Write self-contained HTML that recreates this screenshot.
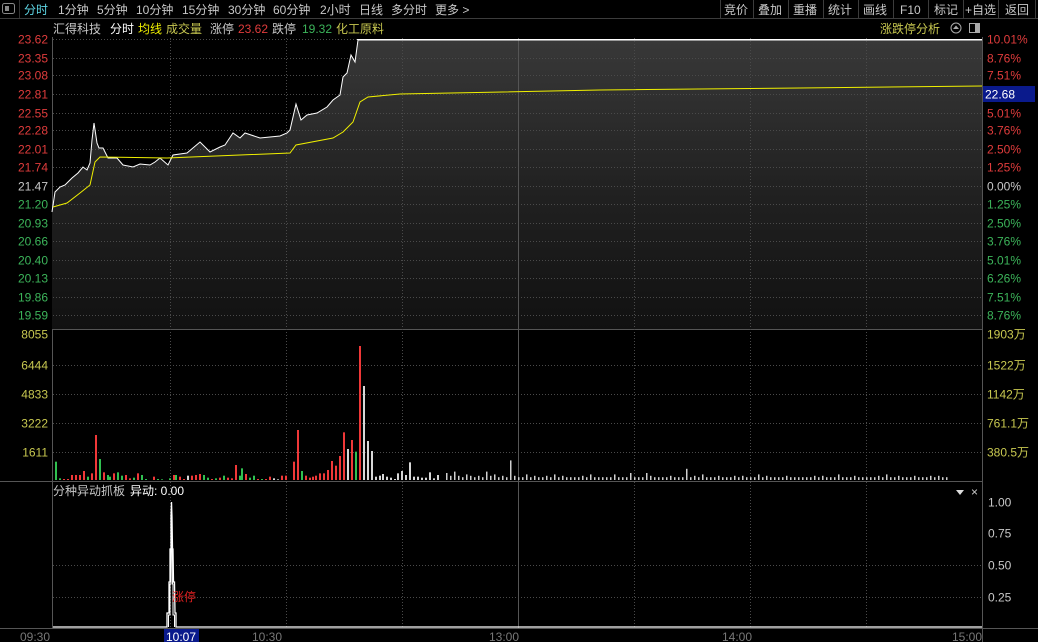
<!DOCTYPE html>
<html><head><meta charset="utf-8"><style>
html,body{margin:0;padding:0;background:#000;width:1038px;height:642px;overflow:hidden}
svg{display:block}
text{font-family:"Liberation Sans","Noto Sans CJK SC",sans-serif;font-size:12px}
</style></head><body>
<svg id="s" width="1038" height="642" xmlns="http://www.w3.org/2000/svg">
<defs>
<linearGradient id="g" x1="0" y1="0" x2="0" y2="1">
<stop offset="0" stop-color="#383838"/><stop offset="0.5" stop-color="#222"/><stop offset="1" stop-color="#111"/>
</linearGradient>
</defs>
<rect width="1038" height="642" fill="#000"/>
<line x1="0" y1="18.5" x2="1038" y2="18.5" stroke="#3c3c3c"/>
<rect x="2.5" y="3.5" width="12" height="10" rx="2" fill="none" stroke="#888"/>
<rect x="5" y="6" width="4" height="5" fill="#888"/>
<line x1="19.5" y1="0" x2="19.5" y2="18" stroke="#333"/>
<g fill="#c8c8c8">
<text x="24" y="14" fill="#5fd7e6">分时</text>
<text x="58" y="14">1分钟</text>
<text x="97" y="14">5分钟</text>
<text x="136" y="14">10分钟</text>
<text x="182" y="14">15分钟</text>
<text x="228" y="14">30分钟</text>
<text x="273" y="14">60分钟</text>
<text x="320" y="14">2小时</text>
<text x="359" y="14">日线</text>
<text x="391" y="14">多分时</text>
<text x="435" y="14">更多 &gt;</text>
<text x="724" y="14">竞价</text>
<text x="758" y="14">叠加</text>
<text x="793" y="14">重播</text>
<text x="828" y="14">统计</text>
<text x="863" y="14">画线</text>
<text x="900" y="14">F10</text>
<text x="934" y="14">标记</text>
<text x="965" y="14">+自选</text>
<text x="1005" y="14">返回</text>
</g>
<g stroke="#3c3c3c">
<line x1="720.5" y1="0" x2="720.5" y2="18"/><line x1="753.5" y1="0" x2="753.5" y2="18"/>
<line x1="788.5" y1="0" x2="788.5" y2="18"/><line x1="823.5" y1="0" x2="823.5" y2="18"/>
<line x1="858.5" y1="0" x2="858.5" y2="18"/><line x1="893.5" y1="0" x2="893.5" y2="18"/>
<line x1="928.5" y1="0" x2="928.5" y2="18"/><line x1="963.5" y1="0" x2="963.5" y2="18"/>
<line x1="998.5" y1="0" x2="998.5" y2="18"/><line x1="1035.5" y1="0" x2="1035.5" y2="18"/>
</g>
<text x="53" y="33" fill="#c8c8c8">汇得科技</text>
<text x="110" y="33" fill="#fff">分时</text>
<text x="138" y="33" fill="#f0f000">均线</text>
<text x="166" y="33" fill="#c8c850">成交量</text>
<text x="210" y="33" fill="#c8c8c8">涨停</text>
<text x="238" y="33" fill="#e03c3c">23.62</text>
<text x="272" y="33" fill="#c8c8c8">跌停</text>
<text x="302" y="33" fill="#3cb45a">19.32</text>
<text x="336" y="33" fill="#c8c850">化工原料</text>
<text x="880" y="33" fill="#c8c850">涨跌停分析</text>
<circle cx="956" cy="28" r="5" fill="none" stroke="#aaa"/><path d="M953 29 L956 25.5 L959 29 Z" fill="#aaa"/>
<rect x="969.5" y="23.5" width="10" height="9" fill="none" stroke="#aaa"/><rect x="975" y="24" width="4" height="8" fill="#aaa"/>
<g stroke="#555" fill="none">
<line x1="52.5" y1="37" x2="52.5" y2="628"/>
<line x1="982.5" y1="37" x2="982.5" y2="642"/>
<line x1="52" y1="329.5" x2="982" y2="329.5"/>
<line x1="0" y1="481.5" x2="982" y2="481.5"/>
<line x1="0" y1="628.5" x2="1038" y2="628.5"/>
</g>
<path id="fill" fill="url(#g)"/>
<g id="grid" stroke="#4a4a4a" stroke-dasharray="1,2"></g>
<polyline id="pl" fill="none" stroke="#fff" stroke-width="1"/>
<polyline id="al" fill="none" stroke="#f0f000" stroke-width="1"/>
<line x1="357" y1="39.5" x2="982" y2="39.5" stroke="#fff"/>
<g id="vol"></g>
<text x="53" y="495" fill="#c8c8c8">分种异动抓板</text>
<text x="130" y="495" fill="#fff">异动: 0.00</text>
<path d="M956 490 L964 490 L960 495 Z" fill="#ddd"/>
<text x="971" y="496" fill="#ccc" font-size="11">×</text>
<polyline fill="none" stroke="#fff" stroke-width="1.3" points="53,627 167,627 167,613 169,613 169,582 170,582 170,549 171,549 171,517 171.5,502 172,517 172.5,549 173,549 173.5,582 174.5,582 175,613 176,613 176,627 982,627"/>
<polyline fill="none" stroke="#fff" points="168.5,627 168.5,615 170,615 170,584 171,584 171,551 171.5,519 172,551 172.5,584 173,584 173,615 174.5,615 174.5,627"/>
<text x="172" y="601" fill="#e02020">涨停</text>
<g id="la" text-anchor="end"></g>
<g id="ra"></g>
<rect x="983" y="86" width="52" height="16" fill="#0a1a8c"/>
<text x="985" y="98.5" fill="#fff">22.68</text>
<g fill="#777">
<text x="20" y="641">09:30</text>
<text x="252" y="641">10:30</text>
<text x="489" y="641">13:00</text>
<text x="722" y="641">14:00</text>
<text x="952" y="641">15:00</text>
</g>
<rect x="164" y="629" width="35" height="13" fill="#0a1a8c"/>
<text x="166" y="641" fill="#fff">10:07</text>
</svg>
<script>
var NS="http://www.w3.org/2000/svg";
function el(p,t,a,tx){var e=document.createElementNS(NS,t);for(var k in a)e.setAttribute(k,a[k]);if(tx)e.textContent=tx;document.getElementById(p).appendChild(e);return e;}
var ph=[39,58,75,94,113,130,149,167,186,204,223,241,260,278,297,315];
ph.forEach(function(y){el('grid','line',{x1:53,x2:982,y1:y+.5,y2:y+.5});});
[365,394,423,452].forEach(function(y){el('grid','line',{x1:53,x2:982,y1:y+.5,y2:y+.5});});
[565,597].forEach(function(y){el('grid','line',{x1:53,x2:982,y1:y+.5,y2:y+.5});});
[170,286,402,634,750,866].forEach(function(x){el('grid','line',{x1:x+.5,x2:x+.5,y1:38,y2:628});});
var ln=el('grid','line',{x1:518.5,x2:518.5,y1:38,y2:628});ln.setAttribute('stroke-dasharray','none');ln.setAttribute('stroke','#555');
var P="52,212 55,192 60,187 65,185 72,178 78,173 83,167 87,170 90,163 92,140 94,123 97,143 99,148 103,148 108,158 117,158 123,165 133,167 140,164 150,165 155,162 160,158 168,165 173,155 187,153 200,142 210,152 220,147 225,145 233,133 240,138 245,133 260,138 270,137 280,136 287,133 290,130 296,104 301,120 307,115 317,113 327,107 333,100 340,95 343,77 347,73 351,55 355,62 358,40 982,40";
document.getElementById('pl').setAttribute('points',P);
document.getElementById('fill').setAttribute('d','M'+P.replace(/ /g,' L')+' L982,329 L52,329 Z');
document.getElementById('al').setAttribute('points',"53,207 67,203 80,193 90,185 95,162 100,157 167,158 240,155 290,153 296,145 333,138 343,132 353,122 360,102 368,97 400,94 600,90 800,88 982,86");
var pl=["23.62","23.35","23.08","22.81","22.55","22.28","22.01","21.74","21.47","21.20","20.93","20.66","20.40","20.13","19.86","19.59"];
var pr=["10.01%","8.76%","7.51%","","5.01%","3.76%","2.50%","1.25%","0.00%","1.25%","2.50%","3.76%","5.01%","6.26%","7.51%","8.76%"];
pl.forEach(function(t,i){var c=i<8?'#e03c3c':(i==8?'#c8c8c8':'#3cb45a');el('la','text',{x:48,y:ph[i]+4.5,fill:c},t);if(pr[i])el('ra','text',{x:987,y:ph[i]+4.5,fill:c},pr[i]);});
[["8055","1903万",334],["6444","1522万",365],["4833","1142万",394],["3222","761.1万",423],["1611","380.5万",452]].forEach(function(a){el('la','text',{x:48,y:a[2]+4.5,fill:'#c8c850'},a[0]);el('ra','text',{x:987,y:a[2]+4.5,fill:'#c8c850'},a[1]);});
[["1.00",502],["0.75",533],["0.50",565],["0.25",597]].forEach(function(a){el('ra','text',{x:988,y:a[1]+4.5,fill:'#c8c8c8'},a[0]);});
var V="45,395,g 58,445,g 70,447,r 80,447,r 92,435,r 104,435,r 116,435,r 128,423,r 140,440,g 152,430,r 164,315,r 176,387,g 188,427,r 200,435,g 208,440,g 220,430,r 232,427,g 244,437,g 256,435,r 268,445,r 280,443,g 292,430,r 302,435,g 314,447,g 326,450,r 338,440,r 350,447,g 362,448,g 374,450,g 386,445,g 398,435,r 406,435,g 418,440,r 430,447,r 442,437,w 454,437,r 466,435,r 478,432,r 490,435,g 502,443,g 514,447,r 526,445,g 536,443,r 548,437,g 560,443,r 572,445,r 584,405,r 596,437,g 604,415,g 616,432,r 628,443,g 640,437,g 652,447,r 664,447,g 676,447,r 688,440,r 700,445,w 712,448,w 722,437,r 734,437,r 746,450,w 758,395,r 770,300,r 782,423,g 794,437,r 806,443,r 816,440,r 826,437,r 838,430,r 850,430,r 862,420,r 874,393,r 886,407,r 898,378,r 910,307,r 920,357,w 932,330,r 944,365,g 956,48,r 968,168,w 980,333,w 992,363,w 1004,440,w 1016,437,w 1026,432,w 1038,440,w 1050,443,w 1062,447,w 1072,430,w 1084,423,w 1096,435,w 1108,397,w 1120,440,w 1132,440,w 1144,443,w 1156,443,w 1166,427,w 1178,445,w 1190,435,w";
var col={r:'#f03838',g:'#30c050',w:'#d8d8d8'};
V.split(' ').forEach(function(b){var a=b.split(',');var x=Math.round(40+a[0]/3);el('vol','rect',{x:x,y:330+a[1]/3,width:2,height:480-(330+a[1]/3),fill:col[a[2]]});});
var hs=[5,3,6,3,2,4,3,2,3,2,6,3,4,2,3,2,14,3,2,2,4,2,3,2,2,3,2,4,2,3,2,2,2,2,3,2,4,2,2,2,2,2,4,2,2,2,5,2,2,2,5,3,2,2,2,2,3,2,2,2,8,2,3,2,4,2,2,2,3,2,2,2,3,2,3,2,2,2,4,2,3,2,2,2,2,3,2,2,2,2,2,2,3,2,3,2,2,2,4,2,2,2,3,2,2,2,2,2,3,2,4,2,2,3,2,2,2,3,2,2,2,3,2,3,2,2];
var x=442;hs.forEach(function(h){x+=4;if(x>980)return;el('vol','rect',{x:x,y:480-h*1.4,width:1.5,height:h*1.4,fill:'#d0d0d0'});});
</script>
</body></html>
